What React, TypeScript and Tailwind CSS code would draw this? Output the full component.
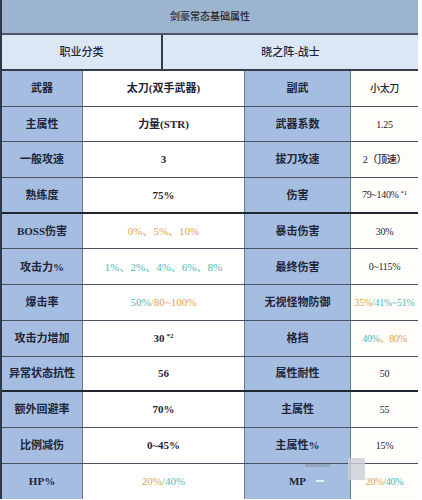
import React from "react";

type Part = { t: string; c?: "o" | "g"; sup?: string };
type Row = { a: string; b: Part[]; c: string; d: Part[]; thick?: boolean };

const rows: Row[] = [
  { a: "武器", b: [{ t: "太刀(双手武器)" }], c: "副武", d: [{ t: "小太刀" }] },
  { a: "主属性", b: [{ t: "力量(STR)" }], c: "武器系数", d: [{ t: "1.25" }] },
  { a: "一般攻速", b: [{ t: "3" }], c: "拔刀攻速", d: [{ t: "2（顶速）" }] },
  { a: "熟练度", b: [{ t: "75%" }], c: "伤害", d: [{ t: "79~140%", sup: "*1" }], thick: true },
  { a: "BOSS伤害", b: [{ t: "0%、5%、10%", c: "o" }], c: "暴击伤害", d: [{ t: "30%" }] },
  { a: "攻击力%", b: [{ t: "1%、2%、4%、6%、8%", c: "g" }], c: "最终伤害", d: [{ t: "0~115%" }] },
  {
    a: "爆击率",
    b: [{ t: "50%", c: "g" }, { t: "/80~100%", c: "o" }],
    c: "无视怪物防御",
    d: [{ t: "35%", c: "o" }, { t: "/41%~51%", c: "g" }],
  },
  {
    a: "攻击力增加",
    b: [{ t: "30", sup: "*2" }],
    c: "格挡",
    d: [{ t: "40%", c: "g" }, { t: "、80%", c: "o" }],
  },
  { a: "异常状态抗性", b: [{ t: "56" }], c: "属性耐性", d: [{ t: "50" }], thick: true },
  { a: "额外回避率", b: [{ t: "70%" }], c: "主属性", d: [{ t: "55" }] },
  { a: "比例减伤", b: [{ t: "0~45%" }], c: "主属性%", d: [{ t: "15%" }] },
  {
    a: "HP%",
    b: [{ t: "20%", c: "o" }, { t: "/40%", c: "g" }],
    c: "MP",
    d: [{ t: "20%", c: "o" }, { t: "/40%", c: "g" }],
  },
];

function Cell({ parts }: { parts: Part[] }) {
  return (
    <span className="whitespace-nowrap">
      {parts.map((p, i) => (
        <span
          key={i}
          className={
            p.c === "o"
              ? "text-[#e0a24a] font-normal"
              : p.c === "g"
              ? "text-[#4fb8b4] font-normal"
              : ""
          }
        >
          {p.t}
          {p.sup && <sup className="text-[7px] ml-[2px]">{p.sup}</sup>}
        </span>
      ))}
    </span>
  );
}

export default function App() {
  return (
    <div
      className="relative w-[422px] h-[500px] bg-white overflow-hidden text-[11px] font-semibold text-[#1e2638]"
      style={{ fontFamily: '"Liberation Serif", "Noto Sans CJK SC", serif' }}
    >
      <div className="w-[418px] border-l-2 border-[#2e3a4c] flex flex-col">
        <div className="h-[35px] bg-[#9cb4d0] border-b-2 border-[#4a5668] flex items-center justify-center text-[10px] font-medium">
          剑豪常态基础属性
        </div>
        <div className="h-[36px] bg-[#dbe7f4] border-b-2 border-[#333c4a] flex font-medium">
          <div className="w-[161px] shrink-0 border-r-2 border-[#333c4a] flex items-center justify-center">
            职业分类
          </div>
          <div className="flex-1 flex items-center justify-center">晓之阵-战士</div>
        </div>
        {rows.map((r, i) => (
          <div
            key={i}
            className={`h-[35.7px] flex ${
              i === rows.length - 1
                ? ""
                : r.thick
                ? "border-b-2 border-[#1f2632]"
                : "border-b border-[#4a5260]"
            }`}
          >
            <div className="w-[81px] shrink-0 bg-[#a5bde0] border-r border-[#6b7890] flex items-center justify-center">
              {r.a}
            </div>
            <div className="w-[162px] shrink-0 bg-white border-r border-[#6b7890] flex items-center justify-center">
              <Cell parts={r.b} />
            </div>
            <div className="w-[106px] shrink-0 bg-[#a5bde0] border-r border-[#6b7890] flex items-center justify-center">
              {r.c}
            </div>
            <div className="flex-1 min-w-0 bg-[#fffdf9] flex items-center justify-center font-medium text-[10px] tracking-[-0.3px]">
              <Cell parts={r.d} />
            </div>
          </div>
        ))}
      </div>
      <div className="absolute left-[348px] top-[458px] w-[17px] h-[22px] bg-[#c9ced6] opacity-80" />
      <div className="absolute left-[305px] top-[464px] w-[25px] h-[3px] bg-[#8b96a8] opacity-60" />
      <div className="absolute left-[316px] top-[480px] w-[8px] h-[2px] bg-[#e6edf6]" />
    </div>
  );
}
